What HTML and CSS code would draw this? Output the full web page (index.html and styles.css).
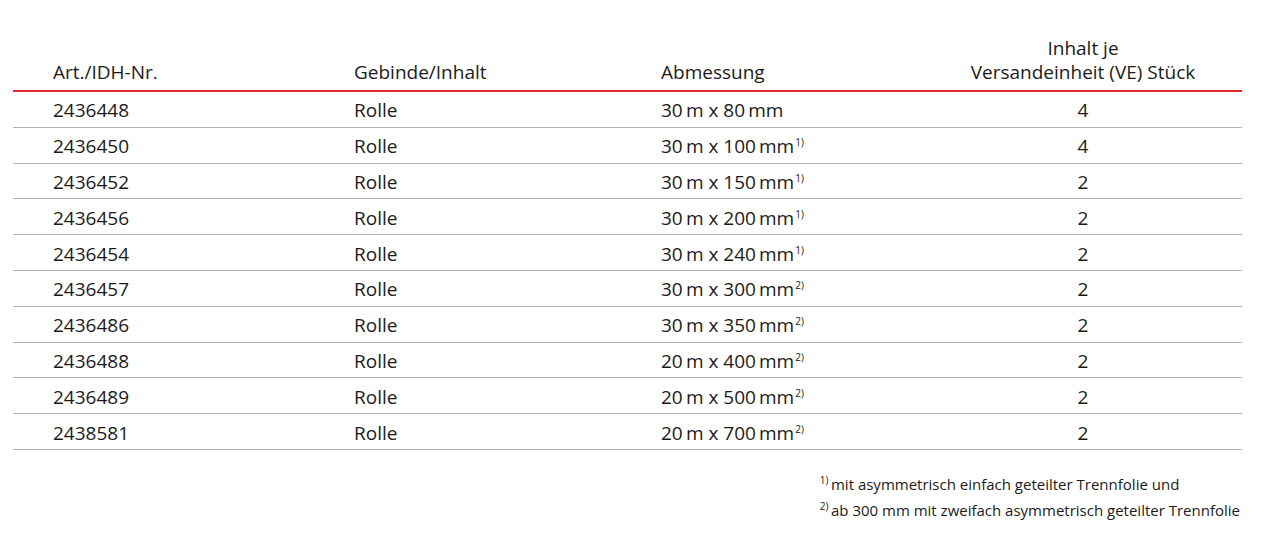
FILE: index.html
```html
<!DOCTYPE html>
<html lang="de">
<head>
<meta charset="utf-8">
<link rel="stylesheet" href="styles.css">
</head>
<body>
<div class="wrap">
  <table class="prod">
    <colgroup>
      <col class="c1"><col class="c2"><col class="c3"><col class="c4">
    </colgroup>
    <thead>
      <tr>
        <th>Art./IDH-Nr.</th>
        <th>Gebinde/Inhalt</th>
        <th>Abmessung</th>
        <th class="num">Inhalt je<br>Versandeinheit (VE) Stück</th>
      </tr>
    </thead>
    <tbody>
      <tr><td>2436448</td><td>Rolle</td><td>30&#8201;m x 80&#8201;mm</td><td class="num">4</td></tr>
      <tr><td>2436450</td><td>Rolle</td><td>30&#8201;m x 100&#8201;mm<sup>1)</sup></td><td class="num">4</td></tr>
      <tr><td>2436452</td><td>Rolle</td><td>30&#8201;m x 150&#8201;mm<sup>1)</sup></td><td class="num">2</td></tr>
      <tr><td>2436456</td><td>Rolle</td><td>30&#8201;m x 200&#8201;mm<sup>1)</sup></td><td class="num">2</td></tr>
      <tr><td>2436454</td><td>Rolle</td><td>30&#8201;m x 240&#8201;mm<sup>1)</sup></td><td class="num">2</td></tr>
      <tr><td>2436457</td><td>Rolle</td><td>30&#8201;m x 300&#8201;mm<sup>2)</sup></td><td class="num">2</td></tr>
      <tr><td>2436486</td><td>Rolle</td><td>30&#8201;m x 350&#8201;mm<sup>2)</sup></td><td class="num">2</td></tr>
      <tr><td>2436488</td><td>Rolle</td><td>20&#8201;m x 400&#8201;mm<sup>2)</sup></td><td class="num">2</td></tr>
      <tr><td>2436489</td><td>Rolle</td><td>20&#8201;m x 500&#8201;mm<sup>2)</sup></td><td class="num">2</td></tr>
      <tr><td>2438581</td><td>Rolle</td><td>20&#8201;m x 700&#8201;mm<sup>2)</sup></td><td class="num">2</td></tr>
    </tbody>
  </table>
  <div class="notes">
    <ul class="notelist">
      <li><sup>1)</sup>&#8201;mit asymmetrisch einfach geteilter Trennfolie und</li>
      <li><sup>2)</sup>&#8201;ab 300 mm mit zweifach asymmetrisch geteilter Trennfolie</li>
    </ul>
  </div>
</div>
</body>
</html>
```

FILE: styles.css
```css
html, body {
  margin: 0;
  padding: 0;
  background: #ffffff;
}

body {
  font-family: "Open Sans", "Noto Sans", sans-serif;
  color: #1b1b1b;
}

.wrap {
  width: 1229px;
  margin-left: 13px;
  padding-top: 36px;
}

.prod {
  width: 1229px;
  border-collapse: collapse;
  table-layout: fixed;
  font-size: 19px;
}

.c1 { width: 301px; }
.c2 { width: 307px; }
.c3 { width: 303px; }
.c4 { width: 318px; }

.prod th {
  font-weight: 400;
  text-align: left;
  vertical-align: bottom;
  line-height: 24px;
  padding: 0 0 6px 40px;
  border-bottom: 2px solid #e3262b;
}

.prod td {
  height: 32.8px;
  padding: 2px 0 0 40px;
  line-height: 24px;
  border-bottom: 1px solid #b3b3b3;
  vertical-align: middle;
}

.prod th.num,
.prod td.num {
  text-align: center;
  padding-left: 0;
}

.prod sup {
  font-size: 10px;
  line-height: 0;
  vertical-align: 7px;
  margin-left: 1px;
}

.notes {
  display: flex;
  justify-content: flex-end;
  padding-top: 21px;
}

.notelist {
  list-style: none;
  margin: 0;
  padding: 0 2px 0 0;
  font-size: 15px;
  line-height: 26px;
}

.notelist sup {
  font-size: 10px;
  line-height: 0;
  vertical-align: 6px;
}
```
